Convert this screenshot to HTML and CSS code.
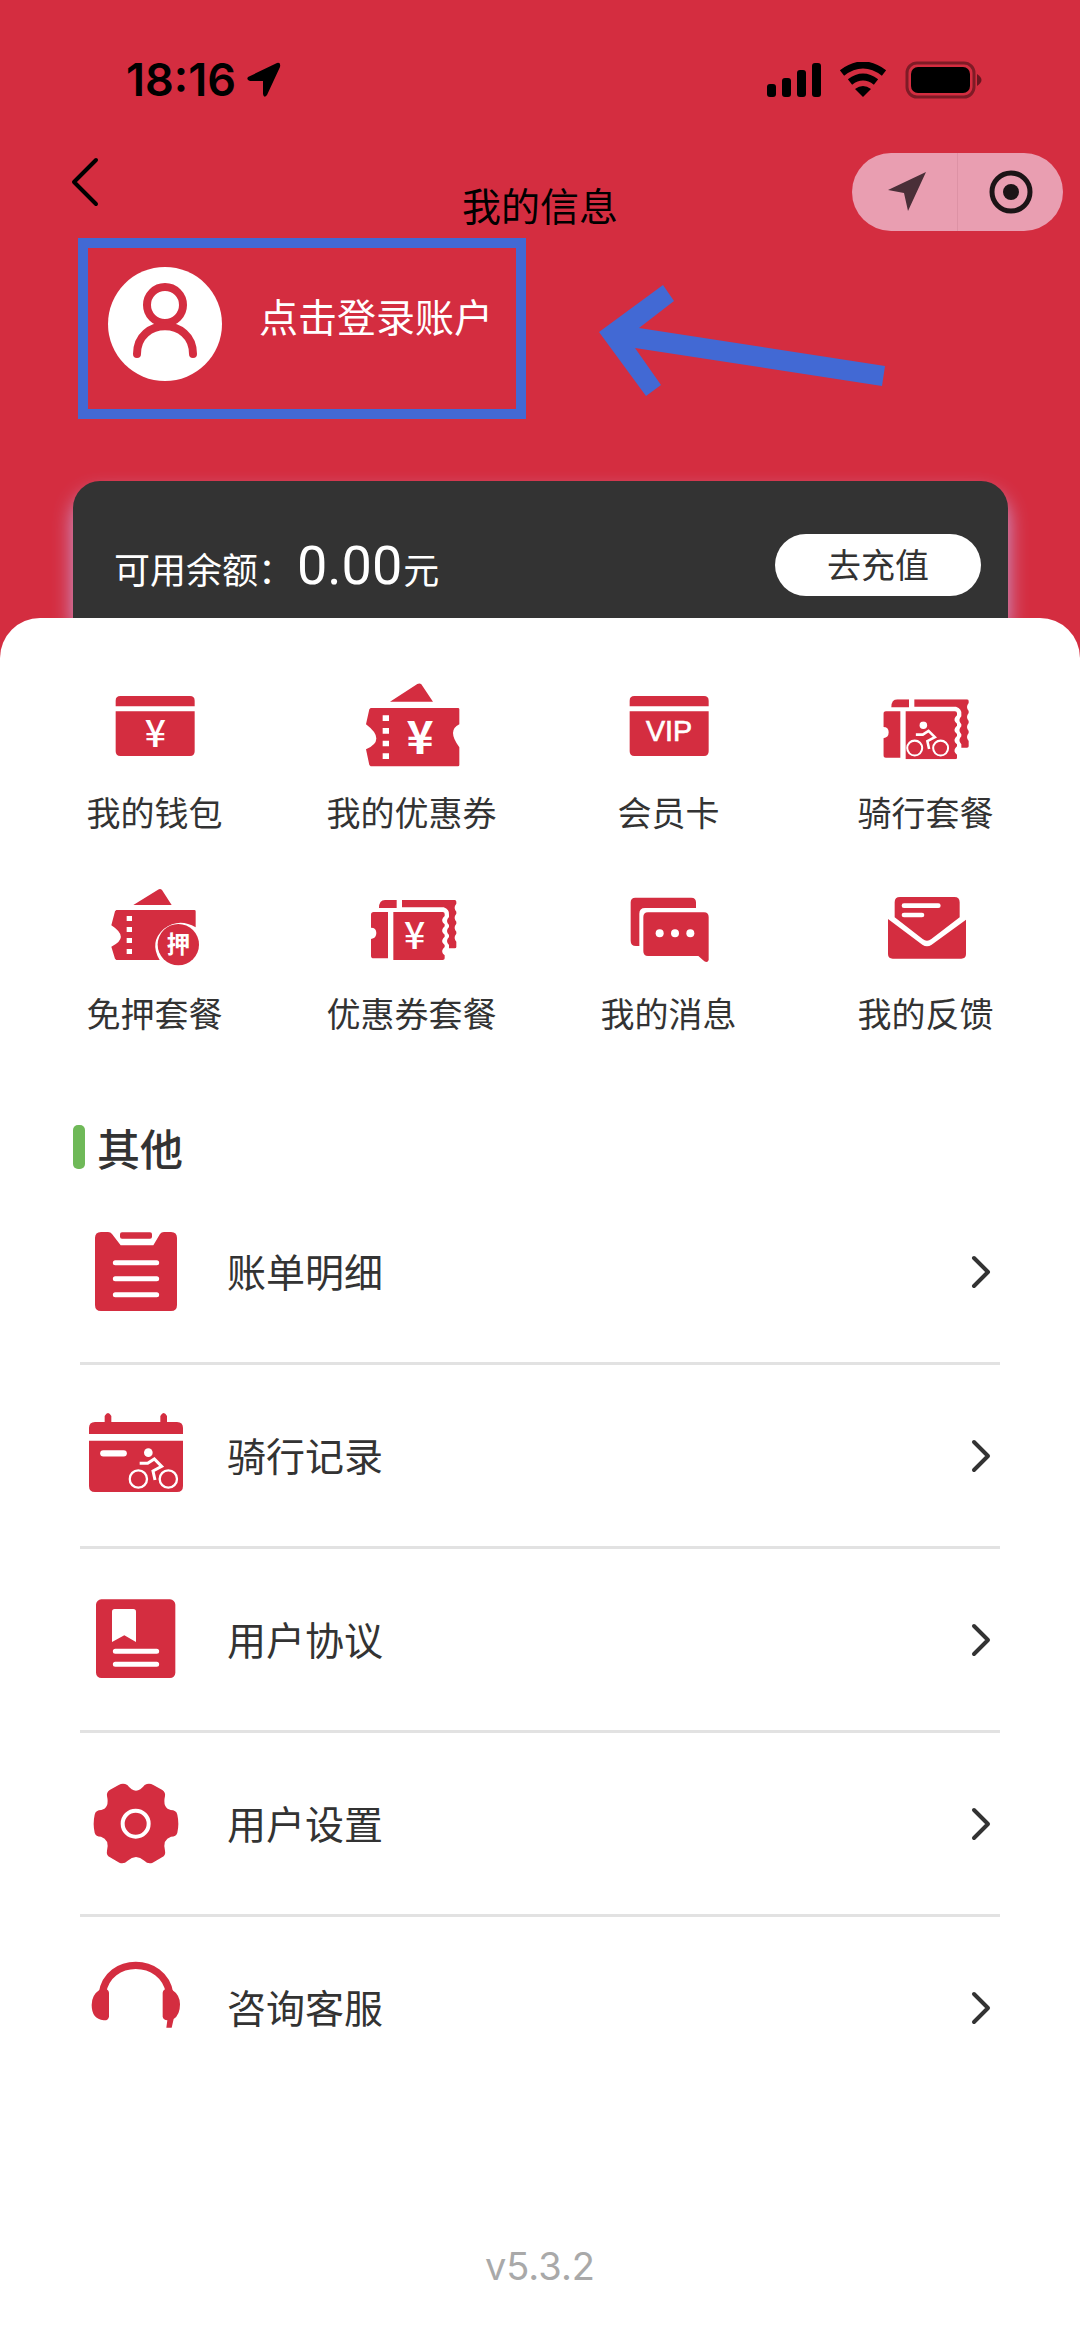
FILE: index.html
```html
<!DOCTYPE html>
<html lang="zh-CN">
<head>
<meta charset="utf-8">
<meta name="viewport" content="width=device-width, initial-scale=1">
<title>我的信息</title>
<link rel="stylesheet" href="styles.css">
</head>
<body>
<svg class="defs" aria-hidden="true">
  <symbol id="chevron" viewBox="0 0 24 40"><path d="M5 6l14 14L5 34" fill="none" stroke="currentColor" stroke-width="4" stroke-linecap="round" stroke-linejoin="round"/></symbol>
  <symbol id="cyclist" viewBox="0 0 150 125">
    <g fill="none" stroke="#fff" stroke-width="7">
      <circle cx="30" cy="93" r="26"/><circle cx="120" cy="93" r="26"/>
      <path d="M34 46h24l20-13 22 22-26 14 6 27" stroke-width="9"/>
    </g>
    <circle cx="60" cy="14" r="13" fill="#fff"/>
  </symbol>
  <symbol id="tickets" viewBox="0 0 260 180">
    <path d="M24 24q0-24 18-24h35v24zM93 0h158q5 0 5 5v6q-10 12 0 24v6q-10 12 0 24v6q-10 12 0 24v6q-10 12 0 24v16q0 4-5 4h-17v-10q-12-12 0-24v-6q-12-12 0-24v-6q-12-12 0-24v-6q2-17-16-23H93z"/>
    <path d="M8 36h43v139H8q-8 0-8-8v-50q16-2 16-18T0 83V44q0-8 8-8zM67 36h148q6 0 6 6v6q-12 11-5 20l5 5v6q-12 11-5 20l5 5v6q-12 11-5 20l5 5v6q-12 11-5 20l5 5v9q0 5-6 5H67z"/>
  </symbol>
</svg>

<header class="hero">
  <div class="status">
    <span class="time">18:16</span>
    <svg class="locate" viewBox="0 0 36 36" aria-hidden="true"><path d="M2 15L31 1q4-1 3 4L21 33q-3 4-4-1V19H4q-4-1-2-4z"/></svg>
    <svg class="signal" viewBox="0 0 54 36" aria-hidden="true"><rect y="22" width="9" height="13" rx="3"/><rect x="15" y="16" width="9" height="19" rx="3"/><rect x="30" y="8" width="9" height="27" rx="3"/><rect x="45" y="1" width="9" height="34" rx="3"/></svg>
    <svg class="wifi" viewBox="0 0 48 36" aria-hidden="true"><path d="M24 35l-8-8q8-6 16 0z"/><g fill="none" stroke="#000" stroke-width="7"><path d="M3 11Q24-5 45 11M11 20q13-10 26 0"/></g></svg>
    <svg class="battery" viewBox="0 0 78 38" aria-hidden="true"><rect x="2" y="2" width="67" height="34" rx="10" fill="none" stroke="#000" stroke-opacity=".4" stroke-width="3"/><rect x="6" y="6" width="59" height="26" rx="7"/><path d="M72 13q9 6 0 12z" opacity=".5"/></svg>
  </div>

  <nav class="nav">
    <button class="back" type="button" aria-label="返回"><svg viewBox="0 0 30 58"><path d="M26 7L4 29l22 22" fill="none" stroke="#000" stroke-width="4" stroke-linecap="round" stroke-linejoin="round"/></svg></button>
    <h1 class="title">我的信息</h1>
    <div class="capsule">
      <button type="button" aria-label="位置"><svg viewBox="0 0 44 44"><path d="M5 20L43 2 25 41l-4-18z" fill="#4a2f38"/></svg></button>
      <button type="button" aria-label="关闭"><svg viewBox="0 0 44 44"><circle cx="22" cy="22" r="19" fill="none" stroke="#1c1416" stroke-width="5"/><circle cx="22" cy="22" r="8" fill="#1c1416"/></svg></button>
    </div>
  </nav>

  <div class="profile">
    <a class="login" href="#login">
      <svg class="avatar" viewBox="0 0 114 114" aria-hidden="true"><circle cx="57" cy="57" r="57" fill="#fff"/><g fill="none" stroke="#d42d40" stroke-width="8" stroke-linecap="round"><circle cx="57" cy="38" r="18"/><path d="M29 87c0-37 56-37 56 0"/></g></svg>
      <span>点击登录账户</span>
    </a>
    <svg class="pointer" viewBox="0 0 286 114" aria-hidden="true"><path d="M0 48L64 1l11 16-35 27 246 38-3 20L36 64l26 37-15 11z" fill="#4269d4"/></svg>
  </div>

  <section class="balance">
    <p class="amount">可用余额：<strong>0.00</strong>元</p>
    <button class="topup" type="button">去充值</button>
  </section>
</header>

<main class="sheet">
  <ul class="grid">
    <li><a href="#wallet"><svg class="tile" viewBox="133 48 300 300"><path d="M165 139v-17q0-14 14-14h209q14 0 14 14v17zM165 154h237v120q0 14-14 14H179q-14 0-14-14z"/><text class="yen" x="284" y="262">¥</text></svg>我的钱包</a></li>
    <li><a href="#coupons"><svg class="tile" viewBox="903 48 300 300"><path d="M987 125l82-53q7-4 12 1l35 52zM929 144h262q4 0 4 4v45q-38 18 0 69v53q0 4-4 4H929l-4-4-10-47q62-28 0-75l10-45z"/><path d="M965 166h19v17h-19zM965 204h19v17h-19zM965 242h19v17h-19zM965 280h19v17h-19z" fill="#fff"/><text class="yen yen-bold" x="1077" y="281">¥</text></svg>我的优惠券</a></li>
    <li><a href="#vip"><svg class="tile" viewBox="172 48 300 300"><path d="M204 139v-17q0-14 14-14h209q14 0 14 14v17zM204 154h237v120q0 14-14 14H218q-14 0-14-14z"/><text class="vip" x="322" y="243">VIP</text></svg>会员卡</a></li>
    <li><a href="#ride-pack"><svg class="tile" viewBox="942 48 300 300"><use href="#tickets" x="964" y="118" width="260" height="180"/><use href="#cyclist" x="1032" y="184" width="130" height="108"/></svg>骑行套餐</a></li>
    <li><a href="#deposit-pack"><svg class="tile" viewBox="133 651 300 300"><path d="M218 735l74-46q7-4 12 1l29 45zM167 750h234q4 0 4 4v48q-50-30-96 5-44 40-12 93H167l-4-4-11-36q57-27 0-64l11-42z"/><circle cx="353" cy="854" r="62"/><path d="M198 768h16v15h-16zM198 801h16v15h-16zM198 834h16v15h-16zM198 867h16v15h-16z" fill="#fff"/><text class="mark" x="353" y="879">押</text></svg>免押套餐</a></li>
    <li><a href="#coupon-pack"><svg class="tile" viewBox="903 651 300 300"><use href="#tickets" x="930" y="720" width="260" height="180"/><text class="yen" x="1061" y="866">¥</text></svg>优惠券套餐</a></li>
    <li><a href="#messages"><svg class="tile" viewBox="172 651 300 300"><path d="M207 727q0-14 14-14h168q14 0 14 14v17H250q-17 0-17 17v97h-10q-16 0-16-16z"/><path d="M259 757h168q14 0 14 14v129q-3 10-13 4l-18-16H259q-14 0-14-14V771q0-14 14-14z"/><g fill="#fff"><circle cx="294" cy="820" r="12"/><circle cx="340" cy="820" r="12"/><circle cx="386" cy="820" r="12"/></g></svg>我的消息</a></li>
    <li><a href="#feedback"><svg class="tile" viewBox="942 651 300 300"><path d="M998 772v-45q0-16 16-16h163q16 0 16 16v45l-85 65q-13 10-26 0z"/><path d="M978 777l103 77q14 9 28 0l103-75v103q0 14-14 14H992q-14 0-14-14z"/><path d="M1026 737h103M1026 765h54" fill="none" stroke="#fff" stroke-width="14" stroke-linecap="round"/></svg>我的反馈</a></li>
  </ul>

  <section>
    <h2 class="heading">其他</h2>
    <ul class="list">
      <li><a href="#bills"><svg class="tile" viewBox="78 366 300 300"><path d="M123 396h21q8 0 12 6l26 34h98l20-34q4-6 12-6h21q18 0 18 18v201q0 18-18 18H123q-18 0-18-18V414q0-18 18-18z"/><rect x="180" y="397" width="96" height="19" rx="6"/><path d="M166 488h124M166 536h124M166 584h124" fill="none" stroke="#fff" stroke-width="15" stroke-linecap="round"/></svg><span>账单明细</span><svg class="go"><use href="#chevron"/></svg></a></li>
      <li><a href="#rides"><svg class="tile" viewBox="78 918 300 300"><path d="M87 1002v-18q0-18 18-18h29v-18q10-18 20 0v18h147v-18q10-18 20 0v18h30q18 0 18 18v18zM87 1022h282v136q0 18-18 18H105q-18 0-18-18z"/><path d="M130 1060h61" stroke="#fff" stroke-width="19" stroke-linecap="round"/><use href="#cyclist" x="205" y="1044" width="150" height="125"/></svg><span>骑行记录</span><svg class="go"><use href="#chevron"/></svg></a></li>
      <li><a href="#terms"><svg class="tile" viewBox="78 90 300 300"><rect x="108" y="118" width="238" height="236" rx="16"/><path d="M156 246v-91q0-8 8-8h56q8 0 8 8v91l-35-20z" fill="#fff"/><path d="M166 274h124M166 313h124" stroke="#fff" stroke-width="15" stroke-linecap="round"/></svg><span>用户协议</span><svg class="go"><use href="#chevron"/></svg></a></li>
      <li><a href="#settings"><svg class="tile" viewBox="78 642 300 300"><path d="M202 675q-13-8-26 0l-27 15q-10 7-8 18 8 36-17 42-17 0-20 14-6 27 0 54 3 12 19 12 26 8 18 42-3 14 9 20l28 16q14 5 25-6 25-22 50 0 11 11 25 6l28-16q12-6 9-20-8-34 18-42 16 0 19-12 6-27 0-54-3-14-20-14-25-6-17-42 2-11-8-18l-27-15q-13-8-26 0-26 34-52 0z"/><circle cx="227" cy="791" r="39" fill="none" stroke="#fff" stroke-width="12"/></svg><span>用户设置</span><svg class="go"><use href="#chevron"/></svg></a></li>
      <li><a href="#support"><svg class="tile" viewBox="78 1194 300 300"><path d="M127 1300c16-112 184-112 202 0" fill="none" stroke="#d42d40" stroke-width="22"/><path d="M118 1290l12-4q16 0 17 12v72q-2 12-16 11-36-4-36-46 0-30 23-45zM337 1290l-12-4q-16 0-17 12v72q2 10 14 11l-3 22h16l6-26q19-12 19-44 0-28-23-43z"/></svg><span>咨询客服</span><svg class="go"><use href="#chevron"/></svg></a></li>
    </ul>
  </section>

  <footer class="version">v5.3.2</footer>
</main>
</body>
</html>
```
FILE: styles.css
```css
* {
  box-sizing: border-box;
  margin: 0;
  padding: 0;
}

body {
  background: #d42d40;
  color: #333;
  font-family: "Noto Sans CJK SC", "Noto Sans", sans-serif;
  font-size: 34px;
  line-height: 48px;
}

a {
  color: inherit;
  text-decoration: none;
}

button {
  border: 0;
  background: none;
  font: inherit;
  color: inherit;
}

ul {
  list-style: none;
}

svg {
  display: block;
  flex: none;
}

.defs {
  position: absolute;
  width: 0;
  height: 0;
}

/* Status bar */
.status {
  display: flex;
  align-items: center;
  padding: 56px 97px 0 126px;
  color: #000;
}

.time {
  font-family: Inter, sans-serif;
  font-size: 45px;
  font-weight: 600;
}

.locate {
  width: 36px;
  height: 36px;
  margin-left: 10px;
}

.signal {
  width: 54px;
  height: 36px;
  margin-left: auto;
}

.wifi {
  width: 48px;
  height: 36px;
  margin-left: 18px;
}

.battery {
  width: 78px;
  height: 38px;
  margin-left: 18px;
}

/* Title bar */
.nav {
  display: grid;
  grid-template-columns: 1fr auto 1fr;
  margin-top: 49px;
  padding: 0 17px 0 70px;
}

.back {
  justify-self: start;
  align-self: start;
}

.back svg {
  width: 30px;
  height: 58px;
}

.title {
  padding: 27px 53px 0 0;
  color: #000;
  font-size: 39px;
  font-weight: 400;
}

.capsule {
  display: flex;
  justify-self: end;
  width: 211px;
  height: 78px;
  border-radius: 39px;
  background: #e99eb1;
}

.capsule button {
  flex: 1;
  display: grid;
  place-items: center;
}

.capsule button + button {
  border-left: 1px solid #dd92a5;
}

.capsule svg {
  width: 44px;
  height: 44px;
}

/* Account */
.profile {
  display: flex;
  align-items: flex-end;
  gap: 73px;
  margin: 7px 78px 0;
}

.login {
  display: flex;
  gap: 37px;
  padding: 19px 23px 28px 20px;
  border: 10px solid #4269d4;
  color: #fff;
  font-size: 39px;
  line-height: 96px;
}

.avatar {
  width: 114px;
  height: 114px;
}

.pointer {
  width: 286px;
  height: 114px;
  margin-bottom: 21px;
}

.balance {
  display: flex;
  align-items: center;
  justify-content: space-between;
  margin: 62px 72px 0 73px;
  padding: 53px 27px 22px 41px;
  border-radius: 27px 27px 0 0;
  background: #333;
  box-shadow: 0 12px 20px #c9a0d8;
  color: #fff;
}

.amount {
  padding-top: 3px;
  font-size: 36px;
}

.amount strong {
  margin: 0 1px 0 3px;
  font-family: Roboto, sans-serif;
  font-size: 54px;
  font-weight: 400;
}

.topup {
  width: 206px;
  height: 62px;
  padding-bottom: 2px;
  border-radius: 31px;
  background: #fff;
  color: #333;
}

/* Sheet */
.sheet {
  position: relative;
  padding: 58px 26px 57px;
  border-radius: 40px 40px 0 0;
  background: #fff;
}

.grid {
  display: grid;
  grid-template-columns: repeat(4, 1fr);
  row-gap: 41px;
}

.grid a {
  display: flex;
  flex-direction: column;
  align-items: center;
  gap: 12px;
}

.tile {
  width: 100px;
  height: 100px;
  fill: #d42d40;
}

.tile text {
  fill: #fff;
  text-anchor: middle;
}

.yen {
  font: 500 112px "Noto Sans CJK SC", sans-serif;
}

.yen-bold {
  font-size: 138px;
  font-weight: 700;
}

.vip {
  font: 500 86px "Liberation Sans", sans-serif;
  stroke: #fff;
  stroke-width: 2px;
}

.mark {
  font: 700 70px "Noto Sans CJK SC", sans-serif;
}

.heading {
  display: flex;
  align-items: center;
  gap: 12px;
  margin: 86px 47px 10px;
  font-size: 43px;
  font-weight: 500;
}

.heading::before {
  content: "";
  width: 12px;
  height: 44px;
  border-radius: 5px;
  background: #6fb958;
}

.list {
  margin: 0 54px;
}

.list li + li {
  border-top: 3px solid #e2e2e2;
}

.list a {
  display: flex;
  align-items: center;
  height: 181px;
  padding: 0 7px 0 6px;
  font-size: 39px;
}

.list span {
  margin-left: 41px;
  padding-bottom: 4px;
}

.go {
  width: 24px;
  height: 40px;
  margin-left: auto;
}

.version {
  margin-top: 144px;
  color: #a9a9a9;
  font-family: Inter, sans-serif;
  font-size: 38px;
  font-weight: 400;
  text-align: center;
}
```
